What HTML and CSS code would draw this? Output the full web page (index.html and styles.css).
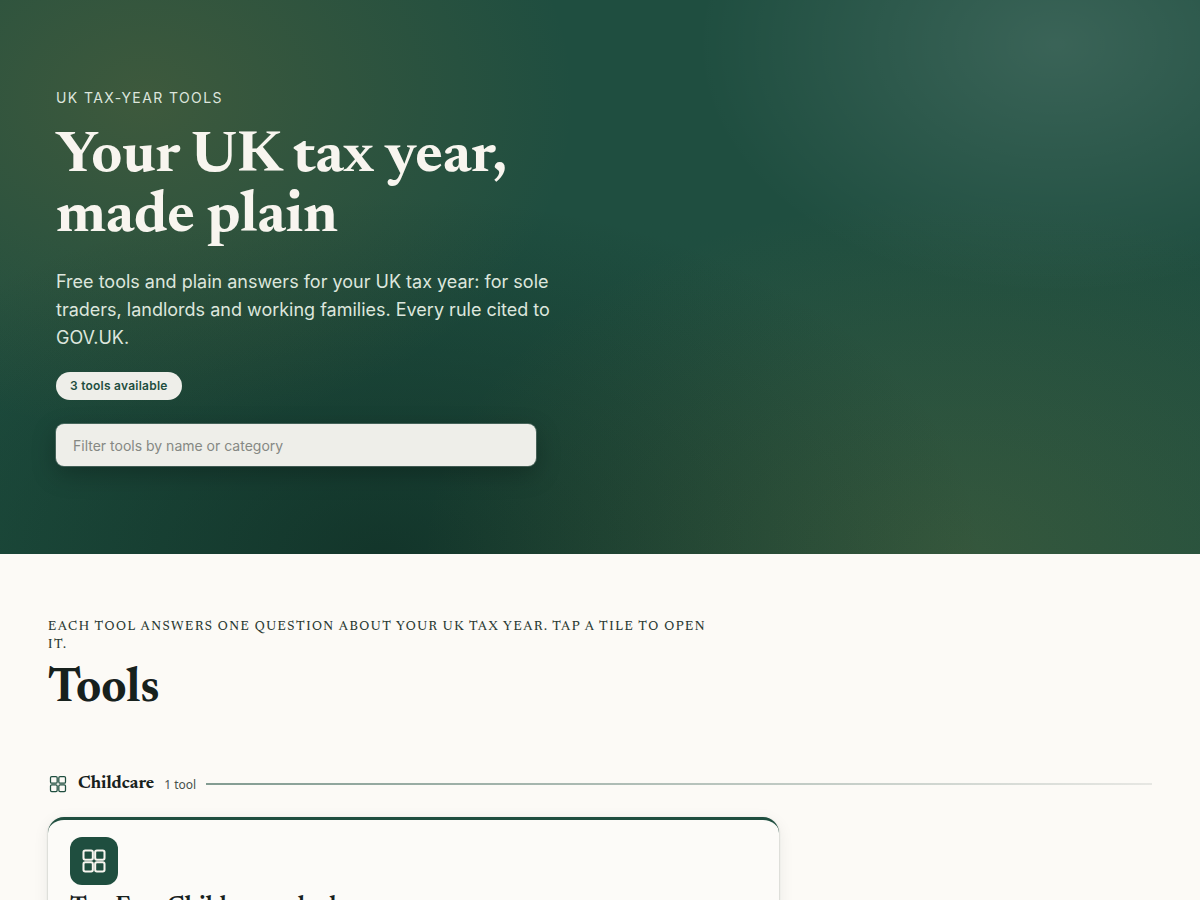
FILE: index.html
```html
<!DOCTYPE html>
<html lang="en-GB">
<head>
    <meta charset="UTF-8">
    <meta name="viewport" content="width=device-width, initial-scale=1.0">
    <title>UK tax-year tools</title>
    <link rel="stylesheet" href="styles.css">
</head>
<body>
    <header class="hero">
        <div class="hero-content">
            <p class="hero-eyebrow">UK tax-year tools</p>
            <h1>Your UK tax year, made plain</h1>
            <p class="hero-lead">Free tools and plain answers for your UK tax year: for sole traders, landlords and working families. Every rule cited to GOV.UK.</p>
            <span class="pill">3 tools available</span>
            <input class="filter" type="search" aria-label="Filter tools" placeholder="Filter tools by name or category">
        </div>
    </header>

    <main class="tools">
        <div class="section-head">
            <p class="section-eyebrow">Each tool answers one question about your UK tax year. Tap a tile to open it.</p>
            <h2>Tools</h2>
        </div>

        <section class="category">
            <div class="category-head">
                <svg class="category-icon" viewBox="0 0 24 24" aria-hidden="true">
                    <rect x="3" y="3" width="8" height="8" rx="1.5"/>
                    <rect x="13" y="3" width="8" height="8" rx="1.5"/>
                    <rect x="3" y="13" width="8" height="8" rx="1.5"/>
                    <rect x="13" y="13" width="8" height="8" rx="1.5"/>
                </svg>
                <h3>Childcare</h3>
                <span class="category-count">1 tool</span>
                <span class="category-rule"></span>
            </div>

            <div class="tile-grid">
                <a class="tile" href="#">
                    <span class="tile-icon">
                        <svg viewBox="0 0 24 24" aria-hidden="true">
                            <rect x="3" y="3" width="8" height="8" rx="1.5"/>
                            <rect x="13" y="3" width="8" height="8" rx="1.5"/>
                            <rect x="3" y="13" width="8" height="8" rx="1.5"/>
                            <rect x="13" y="13" width="8" height="8" rx="1.5"/>
                        </svg>
                    </span>
                    <h4>Tax-Free Childcare calculator</h4>
                </a>
            </div>
        </section>
    </main>
</body>
</html>
```

FILE: styles.css
```css
:root {
    --green: #1f4e3f;
    --ink: #17211d;
    --muted: #46504b;
    --paper: #fcfaf6;
    --serif: Newsreader, 'Liberation Serif', serif;
    --sans: Inter, sans-serif;
}

* {
    box-sizing: border-box;
    margin: 0;
    padding: 0;
}

body {
    background: var(--paper);
    color: var(--ink);
    font-family: var(--sans);
}

.hero {
    padding: 88px 56px;
    background:
        radial-gradient(ellipse 36% 60% at 12% 18%, rgba(184, 134, 46, 0.2), transparent),
        radial-gradient(ellipse 30% 45% at 88% 8%, rgba(255, 255, 255, 0.12), transparent),
        radial-gradient(ellipse 45% 65% at 80% 100%, rgba(184, 134, 46, 0.15), transparent),
        radial-gradient(ellipse 50% 65% at 32% 100%, rgba(8, 28, 22, 0.5), transparent),
        linear-gradient(180deg, #1f4e40 0%, #1f4e40 40%, #1e4f3f 100%);
}

.hero-content {
    max-width: 500px;
}

.hero-eyebrow {
    margin-bottom: 20px;
    font-size: 14px;
    line-height: 20px;
    letter-spacing: 0.1em;
    text-transform: uppercase;
    color: #dde6dd;
}

h1 {
    margin-bottom: 20px;
    font-family: var(--serif);
    font-size: 59px;
    font-weight: 700;
    line-height: 60px;
    color: #f8f5ef;
}

.hero-lead {
    margin-bottom: 20px;
    font-size: 18px;
    line-height: 28px;
    color: #dde6dd;
}

.pill {
    display: block;
    width: fit-content;
    margin-bottom: 24px;
    padding: 0 14px;
    border-radius: 14px;
    background: #eeeee9;
    font-size: 12px;
    font-weight: 600;
    line-height: 28px;
    letter-spacing: 0.02em;
    color: var(--green);
}

.filter {
    display: block;
    width: 100%;
    max-width: 480px;
    height: 42px;
    padding: 0 17px;
    border: 0;
    border-radius: 8px;
    background: #eeeee9;
    box-shadow: 0 0 0 1px rgba(255, 255, 255, 0.2), 0 8px 24px rgba(0, 0, 0, 0.25);
    font-family: var(--sans);
    font-size: 14px;
    color: var(--ink);
}

.filter::placeholder {
    color: #858883;
}

.tools {
    padding: 64px 48px;
}

.section-head {
    max-width: 680px;
    margin-bottom: 55px;
}

.section-eyebrow {
    margin-bottom: 10px;
    font-family: var(--serif);
    font-size: 13px;
    font-weight: 500;
    line-height: 18px;
    letter-spacing: 0.12em;
    text-transform: uppercase;
    color: #2c3b34;
}

h2 {
    font-family: var(--serif);
    font-size: 48px;
    font-weight: 700;
    line-height: 53px;
}

.category-head {
    display: flex;
    align-items: center;
    gap: 10px;
    margin-bottom: 21px;
}

.category-icon {
    width: 20px;
    height: 20px;
    fill: none;
    stroke: var(--green);
    stroke-width: 1.5;
}

h3 {
    font-family: var(--serif);
    font-size: 18px;
    font-weight: 700;
    line-height: 24px;
}

.category-count {
    font-family: 'Noto Sans', sans-serif;
    font-size: 12px;
    color: var(--muted);
}

.category-rule {
    flex: 1;
    height: 2px;
    background: linear-gradient(90deg, #1f4e3f, #d5d7d3);
    opacity: 0.55;
}

.tile-grid {
    display: grid;
    grid-template-columns: repeat(3, 1fr);
    gap: 16px;
}

.tile {
    grid-column: span 2;
    padding: 17px 22px 22px;
    border-top: 3px solid var(--green);
    border-radius: 16px;
    background: #fcfbf8;
    box-shadow: 0 1px 2px rgba(20, 40, 32, 0.35), 0 4px 16px rgba(20, 40, 32, 0.08);
    color: var(--ink);
    text-decoration: none;
}

.tile-icon {
    display: grid;
    place-items: center;
    width: 48px;
    height: 48px;
    margin-bottom: 8px;
    border-radius: 12px;
    background: var(--green);
}

.tile-icon svg {
    width: 28px;
    height: 28px;
    fill: none;
    stroke: #f8f5ef;
    stroke-width: 1.75;
}

h4 {
    font-family: var(--serif);
    font-size: 25px;
    font-weight: 600;
    line-height: 30px;
}
```
